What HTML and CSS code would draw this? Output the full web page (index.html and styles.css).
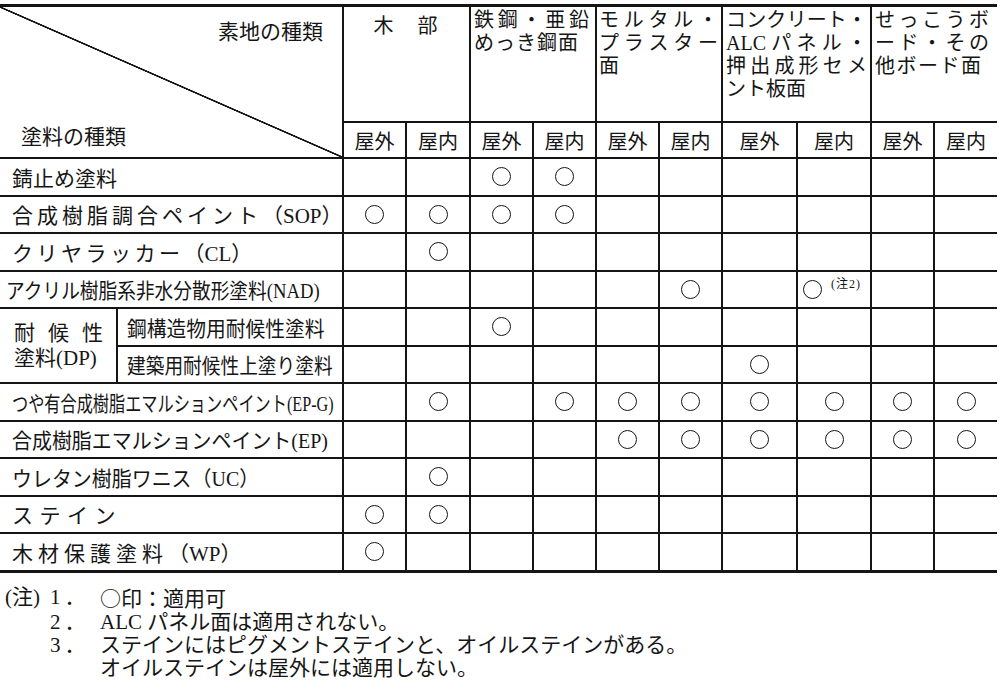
FILE: index.html
```html
<!DOCTYPE html>
<html lang="ja">
<head>
<meta charset="utf-8">
<title>塗料の種類と素地の種類</title>
<link rel="stylesheet" href="styles.css">
</head>
<body>
<div class="sheet">
  <div class="grid">
    <div class="c diag"><span class="dt">素地の種類</span><span class="db">塗料の種類</span></div>
    <div class="c grp g1">木　部</div>
    <div class="c grp g2">
      <div class="ln jf"><span>鉄</span><span>鋼</span><span>・</span><span>亜</span><span>鉛</span></div>
      <div class="ln s1">めっき鋼面</div>
    </div>
    <div class="c grp g3">
      <div class="ln jf"><span>モ</span><span>ル</span><span>タ</span><span>ル</span><span>・</span></div>
      <div class="ln jf"><span>プ</span><span>ラ</span><span>ス</span><span>タ</span><span>ー</span></div>
      <div class="ln">面</div>
    </div>
    <div class="c grp g4">
      <div class="ln jf"><span>コ</span><span>ン</span><span>ク</span><span>リ</span><span>ー</span><span>ト</span><span>・</span></div>
      <div class="ln jf"><span>ALC</span><span>パ</span><span>ネ</span><span>ル</span><span>・</span></div>
      <div class="ln jf"><span>押</span><span>出</span><span>成</span><span>形</span><span>セ</span><span>メ</span></div>
      <div class="ln">ント板面</div>
    </div>
    <div class="c grp g5">
      <div class="ln jf"><span>せ</span><span>っ</span><span>こ</span><span>う</span><span>ボ</span></div>
      <div class="ln jf"><span>ー</span><span>ド</span><span>・</span><span>そ</span><span>の</span></div>
      <div class="ln s15">他ボード面</div>
    </div>

    <div class="c sub">屋外</div><div class="c sub">屋内</div>
    <div class="c sub">屋外</div><div class="c sub">屋内</div>
    <div class="c sub">屋外</div><div class="c sub">屋内</div>
    <div class="c sub">屋外</div><div class="c sub">屋内</div>
    <div class="c sub">屋外</div><div class="c sub">屋内</div>

    <!-- 錆止め塗料 -->
    <div class="c lab">錆止め塗料</div>
    <div class="c"></div><div class="c"></div>
    <div class="c"><span class="o"></span></div><div class="c"><span class="o"></span></div>
    <div class="c"></div><div class="c"></div>
    <div class="c"></div><div class="c"></div>
    <div class="c"></div><div class="c"></div>

    <!-- SOP -->
    <div class="c lab"><span class="ls4">合成樹脂調合ペイント<span class="lt">（SOP）</span></span></div>
    <div class="c"><span class="o"></span></div><div class="c"><span class="o"></span></div>
    <div class="c"><span class="o"></span></div><div class="c"><span class="o"></span></div>
    <div class="c"></div><div class="c"></div>
    <div class="c"></div><div class="c"></div>
    <div class="c"></div><div class="c"></div>

    <!-- CL -->
    <div class="c lab"><span class="ls35">クリヤラッカー<span class="lt">（CL）</span></span></div>
    <div class="c"></div><div class="c"><span class="o"></span></div>
    <div class="c"></div><div class="c"></div>
    <div class="c"></div><div class="c"></div>
    <div class="c"></div><div class="c"></div>
    <div class="c"></div><div class="c"></div>

    <!-- NAD -->
    <div class="c lab lab-tight"><span class="sq s89">アクリル樹脂系非水分散形塗料(NAD)</span></div>
    <div class="c"></div><div class="c"></div>
    <div class="c"></div><div class="c"></div>
    <div class="c"></div><div class="c"><span class="o"></span></div>
    <div class="c"></div><div class="c nt"><span class="o"></span><span class="note">(注2)</span></div>
    <div class="c"></div><div class="c"></div>

    <!-- DP -->
    <div class="c dpl">
      <div class="dln jf"><span>耐</span><span>候</span><span>性</span></div>
      <div class="dln">塗料(DP)</div>
    </div>
    <div class="c subl"><span class="sq s94">鋼構造物用耐候性塗料</span></div>
    <div class="c"></div><div class="c"></div>
    <div class="c"><span class="o"></span></div><div class="c"></div>
    <div class="c"></div><div class="c"></div>
    <div class="c"></div><div class="c"></div>
    <div class="c"></div><div class="c"></div>

    <div class="c subl"><span class="sq s89">建築用耐候性上塗り塗料</span></div>
    <div class="c"></div><div class="c"></div>
    <div class="c"></div><div class="c"></div>
    <div class="c"></div><div class="c"></div>
    <div class="c"><span class="o"></span></div><div class="c"></div>
    <div class="c"></div><div class="c"></div>

    <!-- EP-G -->
    <div class="c lab"><span class="sq s77">つや有合成樹脂エマルションペイント(EP-G)</span></div>
    <div class="c"></div><div class="c"><span class="o"></span></div>
    <div class="c"></div><div class="c"><span class="o"></span></div>
    <div class="c"><span class="o"></span></div><div class="c"><span class="o"></span></div>
    <div class="c"><span class="o"></span></div><div class="c"><span class="o"></span></div>
    <div class="c"><span class="o"></span></div><div class="c"><span class="o"></span></div>

    <!-- EP -->
    <div class="c lab"><span class="sq s95">合成樹脂エマルションペイント(EP)</span></div>
    <div class="c"></div><div class="c"></div>
    <div class="c"></div><div class="c"></div>
    <div class="c"><span class="o"></span></div><div class="c"><span class="o"></span></div>
    <div class="c"><span class="o"></span></div><div class="c"><span class="o"></span></div>
    <div class="c"><span class="o"></span></div><div class="c"><span class="o"></span></div>

    <!-- UC -->
    <div class="c lab"><span class="sq s95">ウレタン樹脂ワニス（UC）</span></div>
    <div class="c"></div><div class="c"><span class="o"></span></div>
    <div class="c"></div><div class="c"></div>
    <div class="c"></div><div class="c"></div>
    <div class="c"></div><div class="c"></div>
    <div class="c"></div><div class="c"></div>

    <!-- ステイン -->
    <div class="c lab"><span class="ls65">ステイン</span></div>
    <div class="c"><span class="o"></span></div><div class="c"><span class="o"></span></div>
    <div class="c"></div><div class="c"></div>
    <div class="c"></div><div class="c"></div>
    <div class="c"></div><div class="c"></div>
    <div class="c"></div><div class="c"></div>

    <!-- WP -->
    <div class="c lab"><span class="ls5">木材保護塗料<span class="lt">（WP）</span></span></div>
    <div class="c"><span class="o"></span></div><div class="c"></div>
    <div class="c"></div><div class="c"></div>
    <div class="c"></div><div class="c"></div>
    <div class="c"></div><div class="c"></div>
    <div class="c"></div><div class="c"></div>
  </div>

  <div class="notes">
    <span class="nh">(注)</span><span class="nn">1．</span><span class="nx"><span class="cjk">○</span>印：適用可</span>
    <span class="nn c2">2．</span><span class="nx">ALC パネル面は適用されない。</span>
    <span class="nn c2">3．</span><span class="nx">ステインにはピグメントステインと、オイルステインがある。</span>
    <span class="nx c3">オイルステインは屋外には適用しない。</span>
  </div>
</div>
</body>
</html>
```

FILE: styles.css
```css
html, body {
  margin: 0;
  padding: 0;
  background: #ffffff;
}

body {
  font-family: "Liberation Serif", "Noto Sans CJK JP", serif;
  color: #151515;
  width: 1000px;
  height: 694px;
  overflow: hidden;
}

.sheet {
  padding-top: 4px;
}

.grid {
  display: grid;
  width: 997px;
  background: #151515;
  gap: 2px;
  padding: 3px 0;
  grid-template-columns: 116px 224px 61px 62px 61px 61px 61px 61px 73px 72px 61px 62px;
  grid-template-rows: 114px 34px repeat(11, 35.5px);
  box-sizing: border-box;
}

.c {
  background: #ffffff;
  display: flex;
  align-items: center;
  justify-content: center;
  min-width: 0;
  box-sizing: border-box;
  font-size: 21px;
  white-space: nowrap;
}

/* diagonal corner */
.diag {
  grid-column: 1 / 3;
  grid-row: 1 / 3;
  flex-direction: column;
  align-items: stretch;
  justify-content: space-between;
  padding: 13px 19px 8px 21px;
  background: linear-gradient(to top right,
    #ffffff calc(50% - 1.1px),
    #151515 calc(50% - 0.6px),
    #151515 calc(50% + 0.6px),
    #ffffff calc(50% + 1.1px));
  line-height: 24px;
}

.dt { align-self: flex-end; }
.db { align-self: flex-start; }

/* group headers */
.grp {
  grid-column: span 2;
  display: block;
  font-size: 20px;
  text-align: left;
}

.g1 {
  display: flex;
  align-items: flex-start;
  justify-content: center;
  padding-top: 8px;
  letter-spacing: 2px;
  line-height: 23px;
}

.g2 { padding: 2px 6px 0 3px; }
.g3 { padding: 2px 3px 0 2px; }
.g4 { padding: 2px 3px 0 3px; }
.g5 { padding: 2px 8px 0 3px; }

.ln {
  height: 23px;
  line-height: 23px;
  white-space: nowrap;
}

.jf {
  display: flex;
  justify-content: space-between;
}

.s1 { letter-spacing: 1px; }
.s15 { letter-spacing: 1.5px; }

.sub {
  font-size: 20px;
  padding-top: 1px;
}

/* row labels */
.lab {
  grid-column: 1 / 3;
  justify-content: flex-start;
  padding-left: 12px;
}

.lab-tight { padding-left: 6px; }

.sq {
  display: inline-block;
  transform-origin: left center;
}

.s77 { transform: scaleX(0.77); }
.s89 { transform: scaleX(0.89); }
.s94 { transform: scaleX(0.94); }
.s95 { transform: scaleX(0.95); }

.ls35 { letter-spacing: 3.5px; }
.ls4 { letter-spacing: 4px; }
.ls5 { letter-spacing: 5px; }
.ls65 { letter-spacing: 6.5px; }
.lt { letter-spacing: 0; }

.dpl {
  grid-column: 1;
  grid-row: span 2;
  flex-direction: column;
  align-items: stretch;
  justify-content: center;
  padding: 0 13px 0 14px;
}

.dln {
  height: 25px;
  line-height: 25px;
}

.subl {
  grid-column: 2;
  justify-content: flex-start;
  padding-left: 9px;
}

/* circle mark */
.o {
  display: block;
  width: 19px;
  height: 19px;
  border: 1.4px solid #151515;
  border-radius: 50%;
  box-sizing: border-box;
}

.nt {
  justify-content: flex-start;
  padding-left: 5px;
}

.note {
  align-self: flex-start;
  margin-top: 6px;
  margin-left: 9px;
  font-size: 12px;
  line-height: 12px;
  letter-spacing: 1px;
}

/* notes */
.notes {
  display: grid;
  grid-template-columns: 50px 50px auto;
  margin-top: 13px;
  font-size: 21px;
  line-height: 23px;
  white-space: nowrap;
}

.nh { padding-left: 5px; }
.nn { letter-spacing: 4px; }
.c2 { grid-column: 2; }
.c3 { grid-column: 3; }
.cjk { font-family: "Noto Sans CJK JP", sans-serif; }
```
